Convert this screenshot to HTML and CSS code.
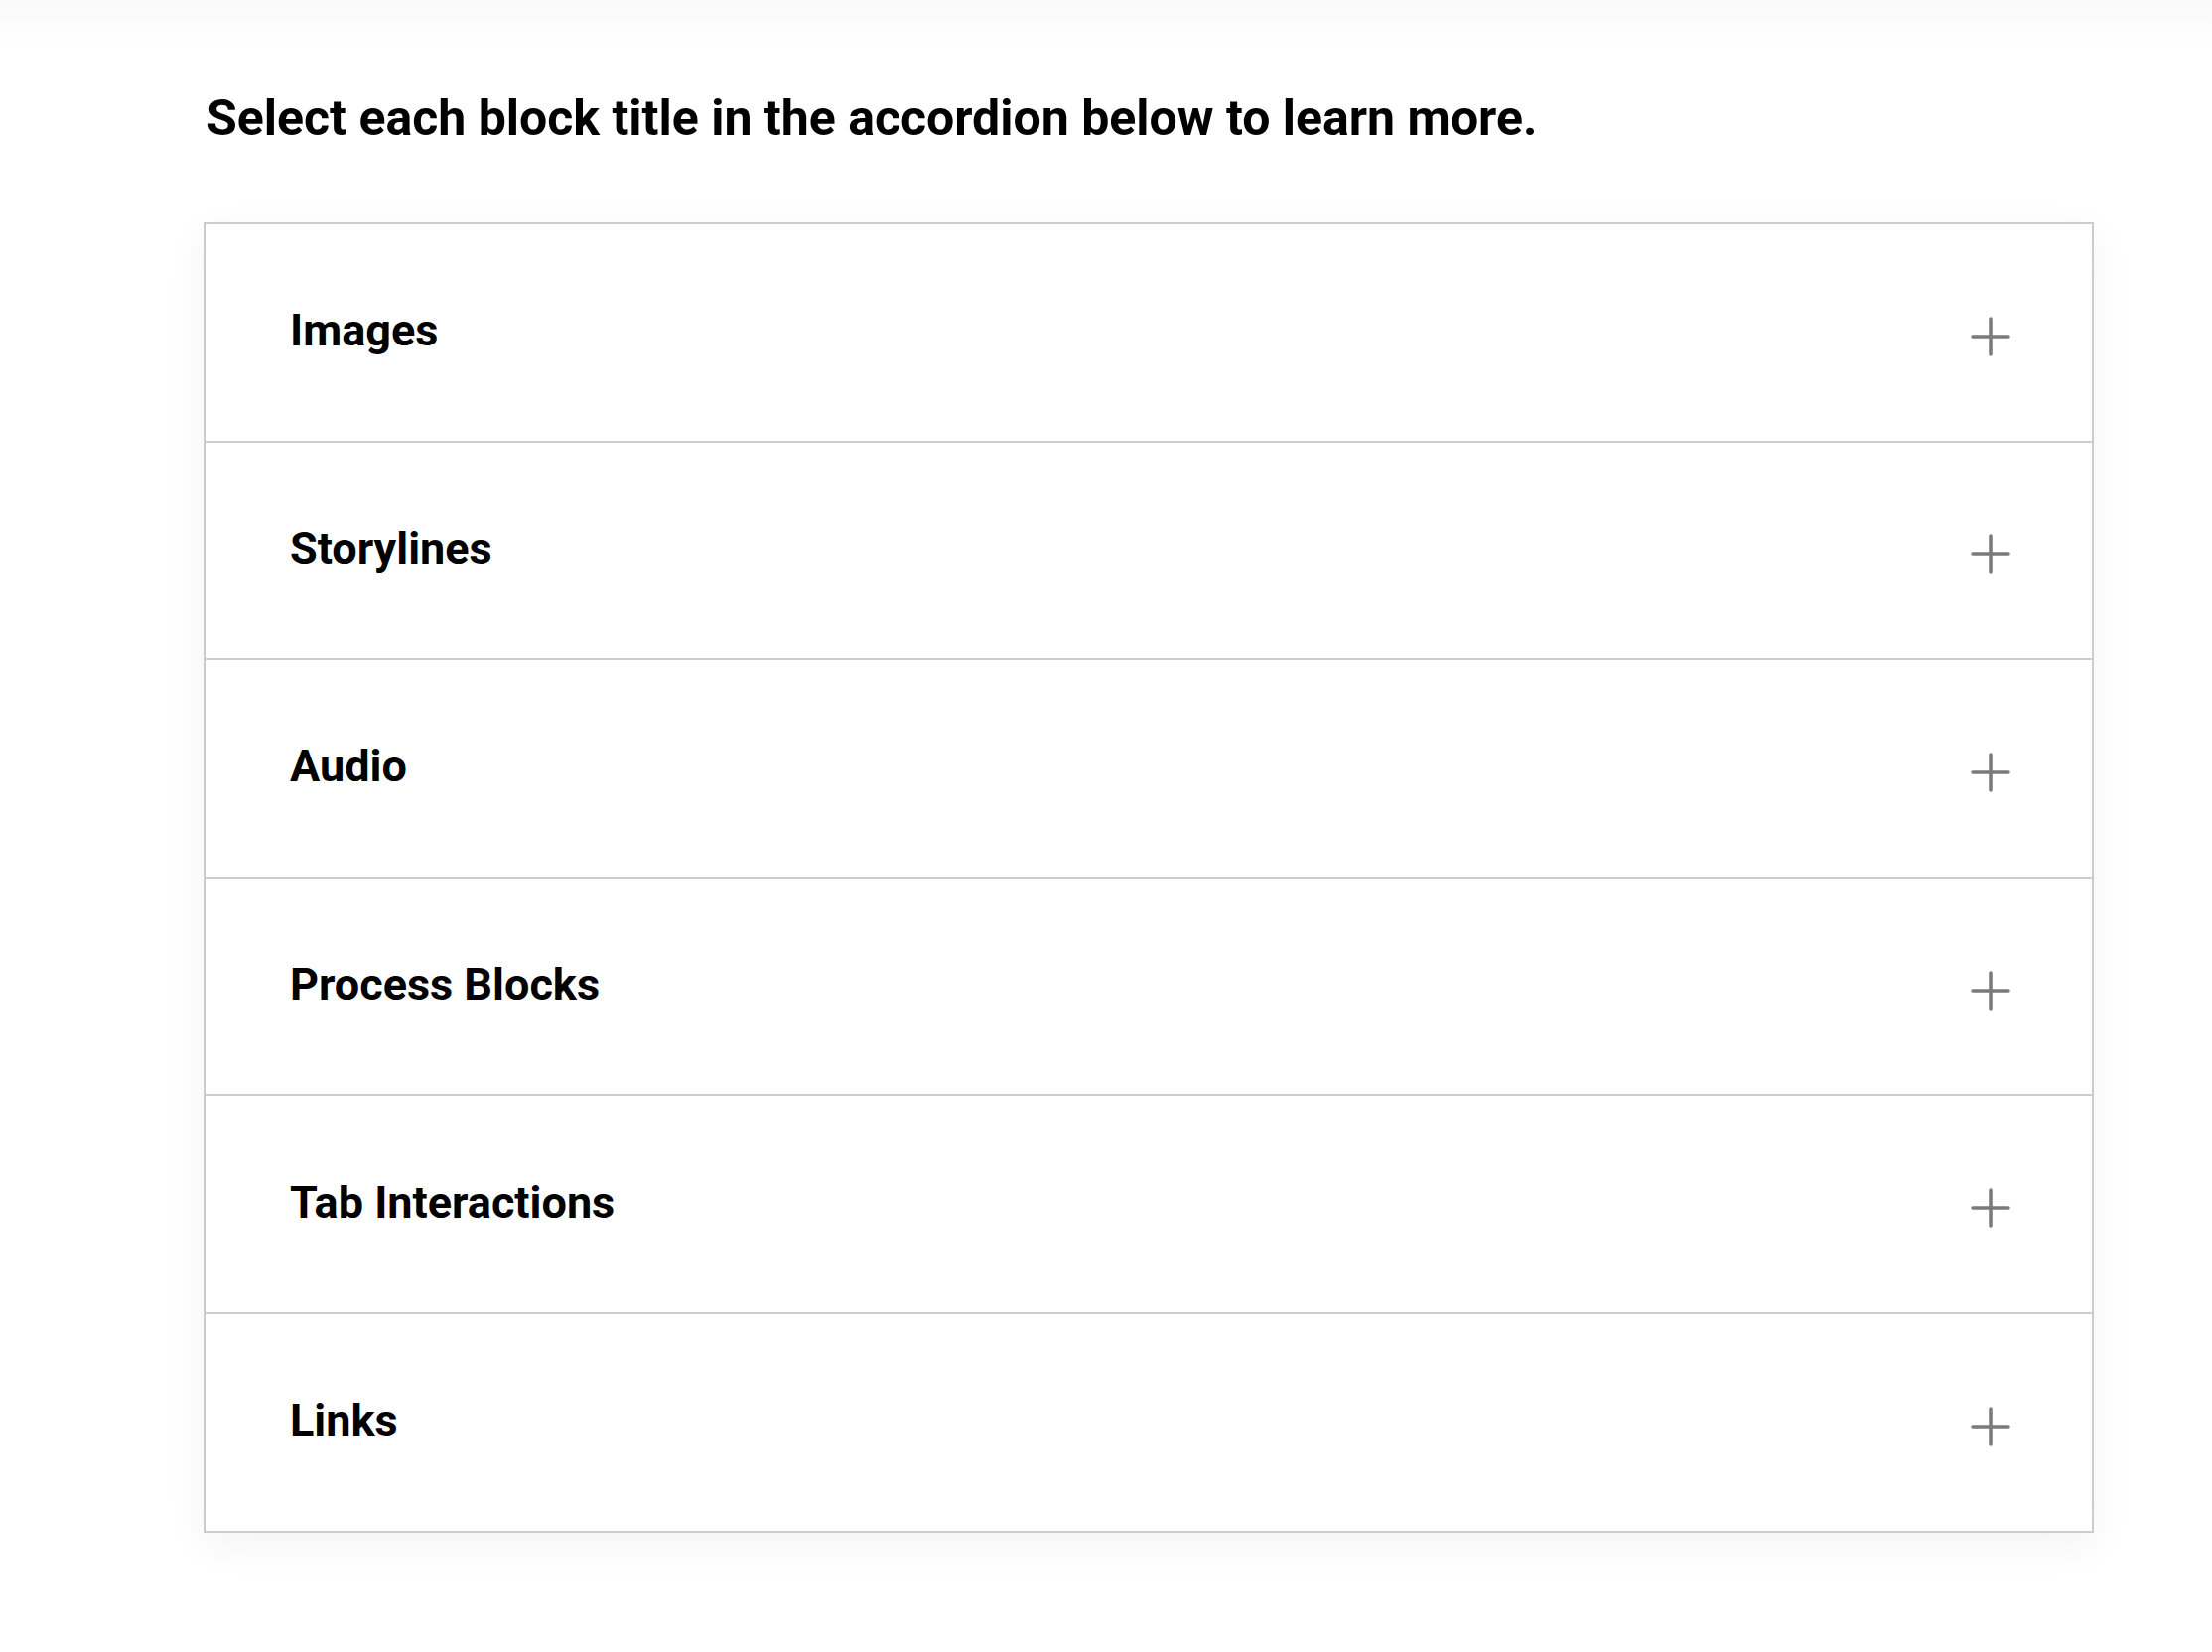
FILE: index.html
```html
<!DOCTYPE html>
<html lang="en">
<head>
<meta charset="utf-8">
<title>Accordion</title>
<link rel="stylesheet" href="styles.css">
</head>
<body>
<main class="page">
  <h2 class="intro">Select each block title in the accordion below to learn more.</h2>
  <div class="accordion">
    <div class="item"><span class="title">Images</span><svg class="plus" viewBox="0 0 40 40"><path d="M2 20H38M20 2V38"/></svg></div>
    <div class="item"><span class="title">Storylines</span><svg class="plus" viewBox="0 0 40 40"><path d="M2 20H38M20 2V38"/></svg></div>
    <div class="item"><span class="title">Audio</span><svg class="plus" viewBox="0 0 40 40"><path d="M2 20H38M20 2V38"/></svg></div>
    <div class="item"><span class="title">Process Blocks</span><svg class="plus" viewBox="0 0 40 40"><path d="M2 20H38M20 2V38"/></svg></div>
    <div class="item"><span class="title">Tab Interactions</span><svg class="plus" viewBox="0 0 40 40"><path d="M2 20H38M20 2V38"/></svg></div>
    <div class="item"><span class="title">Links</span><svg class="plus" viewBox="0 0 40 40"><path d="M2 20H38M20 2V38"/></svg></div>
  </div>
</main>
</body>
</html>
```

FILE: styles.css
```css
html, body {
  margin: 0;
  padding: 0;
}
body {
  background: linear-gradient(#f9f9f9 0, #ffffff 50px) no-repeat, #ffffff;
  font-family: Roboto, "Liberation Sans", Arial, sans-serif;
  color: #000;
  min-height: 1664px;
}
.page {
  padding: 91px 0 0 205px;
}
.intro {
  margin: 0 0 77px 3px;
  font-size: 50px;
  font-weight: 700;
  line-height: 56px;
}
.accordion {
  width: 1900px;
  border: 2px solid #cccccc;
  background: #fff;
  box-shadow: 0 12px 40px rgba(0, 0, 0, 0.05);
}
.item {
  height: 217.6px;
  box-sizing: content-box;
  display: flex;
  align-items: center;
  justify-content: space-between;
  padding: 0 82px 0 85px;
}
.item + .item {
  border-top: 2px solid #cccccc;
}
.title {
  font-size: 45px;
  font-weight: 700;
  line-height: 52px;
  margin-bottom: 3px;
}
.plus {
  width: 40px;
  height: 40px;
  margin-top: 8px;
  fill: none;
  stroke: #7a7a7a;
  stroke-width: 3.5;
  stroke-linecap: round;
}
```
